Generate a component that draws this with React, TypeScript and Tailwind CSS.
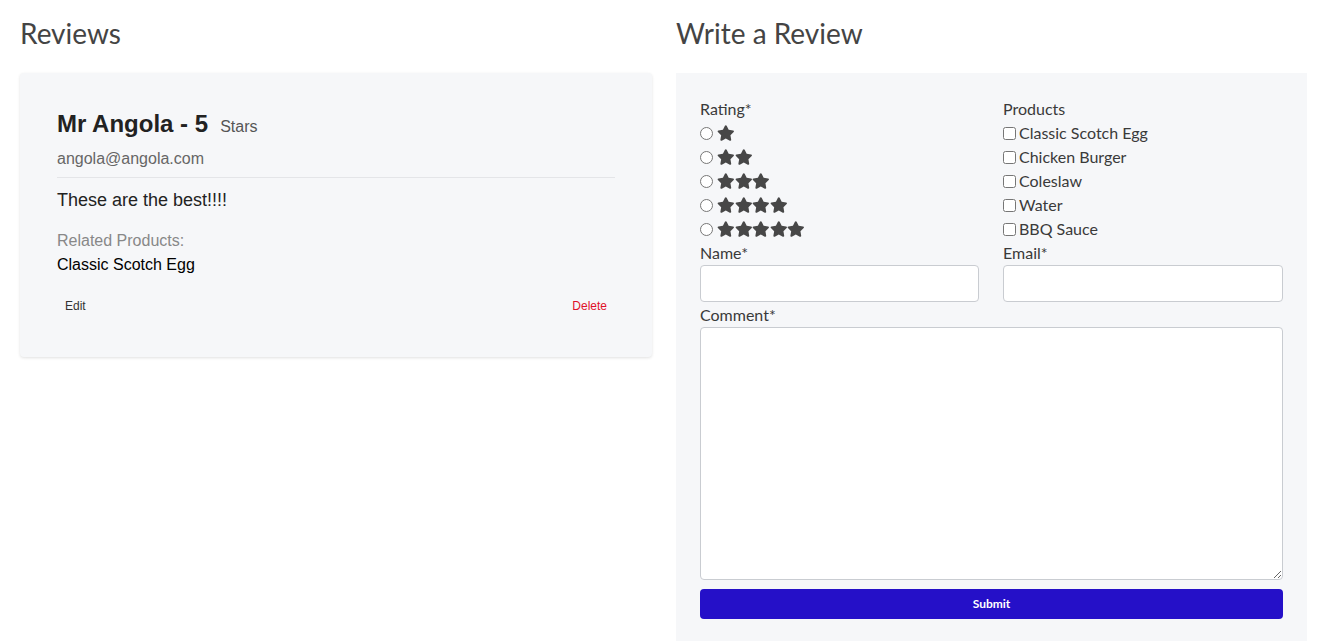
import { FaStar } from "react-icons/fa";

const products = ["Classic Scotch Egg", "Chicken Burger", "Coleslaw", "Water", "BBQ Sauce"];

const ReviewCard = () => {
  return (
    <div className="rounded bg-[#f6f7f9] px-[37px] pt-[35px] pb-[43px] shadow-[0_1px_3px_rgba(0,0,0,0.12)] font-['Liberation_Sans',Arial,sans-serif]">
      <div className="flex h-7 items-baseline">
        <span className="text-2xl font-bold text-[#222]">Mr Angola - 5</span>
        <span className="ml-3 text-base text-[#555]">Stars</span>
      </div>
      <p className="mt-[13px] text-base leading-5 text-[#666]">angola@angola.com</p>
      <hr className="mt-2 border-t border-[#e4e5e8]" />
      <p className="mt-[11px] text-lg leading-[22px] text-[#222]">These are the best!!!!</p>
      <p className="mt-5 text-base leading-5 text-[#888]">Related Products:</p>
      <p className="mt-1 text-base leading-5 text-black">Classic Scotch Egg</p>
      <div className="mt-[23px] flex justify-between text-xs leading-4">
        <button className="px-2 text-[#333]">Edit</button>
        <button className="px-2 text-[#e0102a]">Delete</button>
      </div>
    </div>
  );
};

const Stars = ({ count }: { count: number }) => (
  <span className="flex">
    {Array.from({ length: count }).map((_, i) => (
      <FaStar key={i} className="h-4 w-[17.6px] text-[#474747]" />
    ))}
  </span>
);

const ReviewForm = () => {
  return (
    <form className="bg-[#f6f7f9] px-6 pt-6 pb-8 text-base text-[#3a3a3a] font-['Lato',sans-serif]">
      <div className="grid grid-cols-[279px_280px] gap-x-6">
        <div>
          <div className="h-6 leading-6">Rating*</div>
          {[1, 2, 3, 4, 5].map((n) => (
            <label key={n} className="flex h-6 items-center">
              <input type="radio" name="rating" className="m-0 mr-1 h-[13px] w-[13px]" />
              <Stars count={n} />
            </label>
          ))}
          <div className="h-6 leading-6">Name*</div>
          <input className="block h-[37px] w-full rounded border border-[#c9ccd1] bg-white" />
        </div>
        <div>
          <div className="h-6 leading-6">Products</div>
          {products.map((p) => (
            <label key={p} className="flex h-6 items-center">
              <input type="checkbox" className="m-0 mr-[3px] h-[13px] w-[13px]" />
              <span>{p}</span>
            </label>
          ))}
          <div className="h-6 leading-6">Email*</div>
          <input className="block h-[37px] w-full rounded border border-[#c9ccd1] bg-white" />
        </div>
      </div>
      <div className="mt-px h-6 leading-6">Comment*</div>
      <textarea className="block h-[253px] w-full rounded border border-[#c9ccd1] bg-white" />
      <button
        type="button"
        className="mt-[9px] block h-[30px] w-full rounded bg-[#2510c8] text-xs font-bold text-white font-['Lato',sans-serif]"
      >
        Submit
      </button>
    </form>
  );
};

export default function App() {
  return (
    <div className="flex gap-6 bg-white pl-5 pt-4 font-['Lato',sans-serif]">
      <section className="w-[632px]">
        <h2 className="text-[28px] leading-[34px] text-[#444]">Reviews</h2>
        <div className="mt-[23px]">
          <ReviewCard />
        </div>
      </section>
      <section className="w-[631px]">
        <h2 className="text-[28px] leading-[34px] text-[#444]">Write a Review</h2>
        <div className="mt-[23px]">
          <ReviewForm />
        </div>
      </section>
    </div>
  );
}
